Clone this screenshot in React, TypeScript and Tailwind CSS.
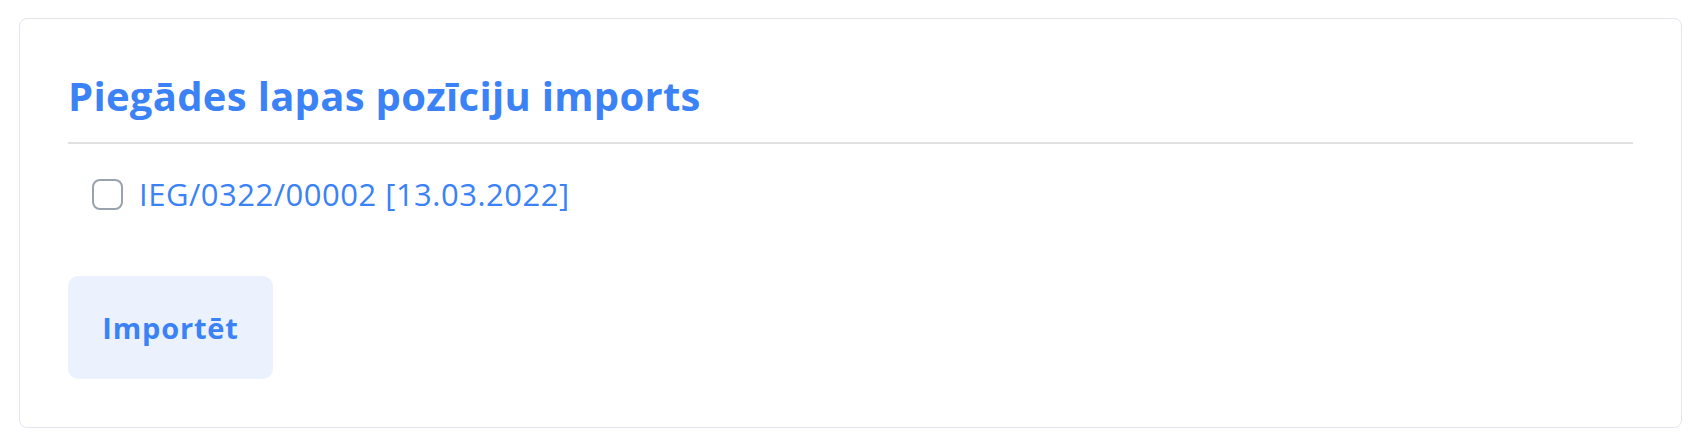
import React from "react";

export default function App() {
  return (
    <div className="w-[1704px] h-[448px] bg-white pt-[18px] pl-[19px]" style={{ fontFamily: '"Open Sans", "Noto Sans", sans-serif' }}>
      <div className="w-[1663px] h-[410px] border border-[#e3e6ef] rounded-[8px] bg-white px-12 pt-12">
        <h2 className="mt-[2px] text-[40px] leading-[54px] tracking-[0.3px] font-bold text-[#3b82f6] pb-[19px] border-b-2 border-[#e0e0e0]">
          Piegādes lapas pozīciju imports
        </h2>
        <label className="mt-[30px] flex items-center pl-6 h-[41px]">
          <span className="w-[31px] h-[31px] rounded-[8px] border-2 border-[#9aa3ad] bg-white shrink-0" />
          <span className="ml-[16px] text-[31px] leading-[41px] tracking-[0.5px] text-[#3b82f6]">IEG/0322/00002 [13.03.2022]</span>
        </label>
        <button className="mt-[61px] w-[205px] h-[103px] rounded-[10px] bg-[#ebf2fe] text-[#3b82f6] text-[29px] tracking-[0.8px] font-bold flex items-center justify-center">
          Importēt
        </button>
      </div>
    </div>
  );
}
